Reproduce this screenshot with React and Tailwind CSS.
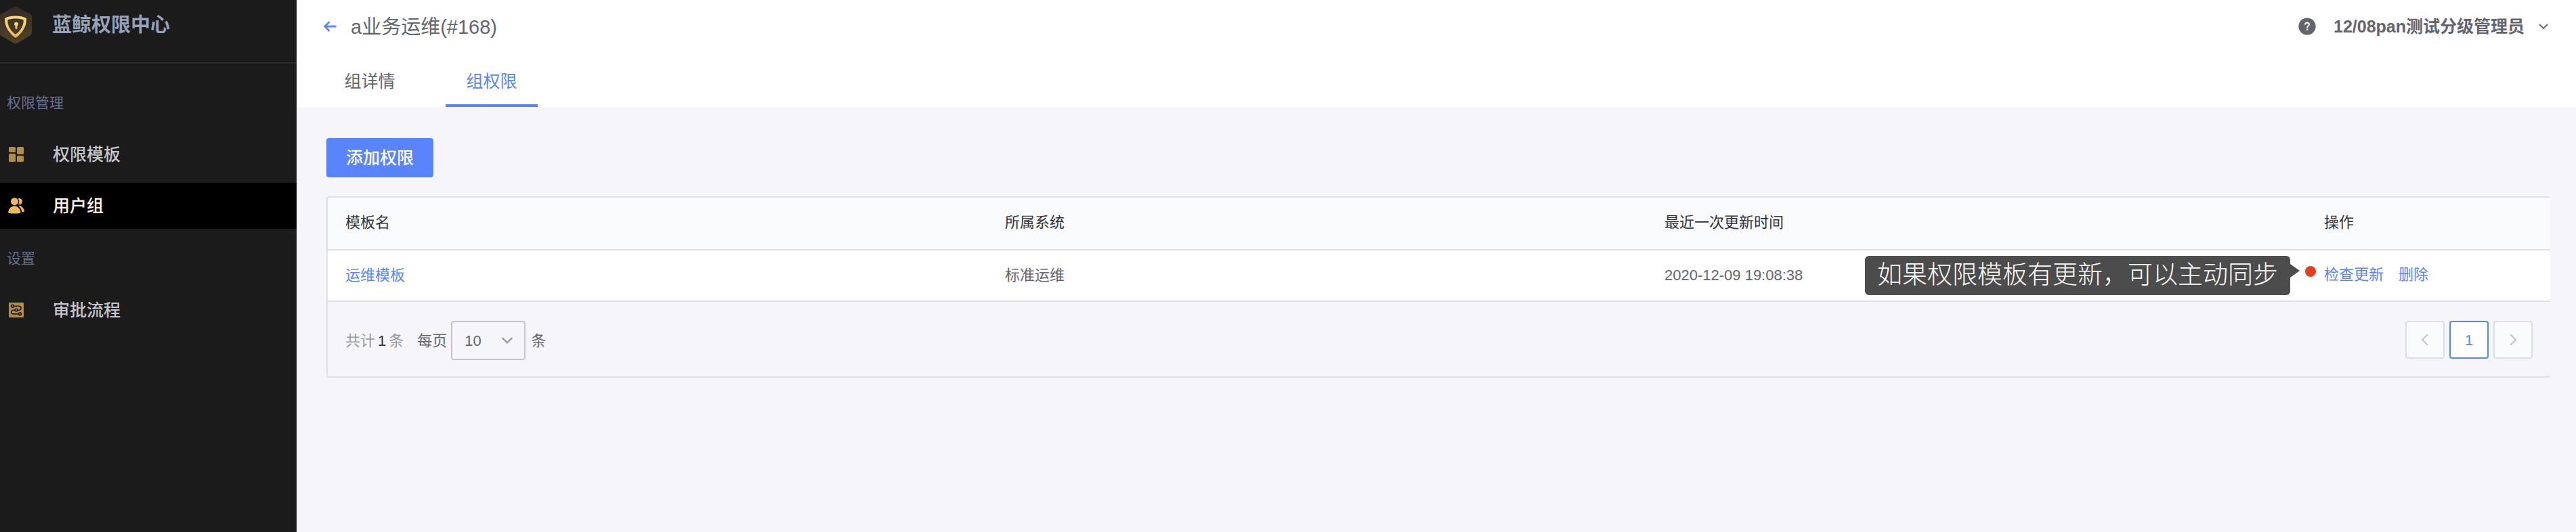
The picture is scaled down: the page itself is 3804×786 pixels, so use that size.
import React from "react";

const columns = ["模板名", "所属系统", "最近一次更新时间", "操作"];

function LogoIcon() {
  return (
    <svg className="-ml-0.5 h-14 w-[50px] shrink-0" viewBox="0 0 50 56" aria-hidden="true">
      <defs>
        <linearGradient id="hex" x1="0" y1="0" x2="0" y2="1">
          <stop offset="0" stopColor="#332d22" />
          <stop offset="1" stopColor="#51422a" />
        </linearGradient>
        <linearGradient id="gold" x1="0" y1="0" x2="0" y2="1">
          <stop offset="0" stopColor="#f9dc80" />
          <stop offset="1" stopColor="#edb758" />
        </linearGradient>
      </defs>
      <path d="M23 1Q25 0 27 1L47 12Q49 13.200 49 15V40Q49 42 47 43.200L27 55Q25 56 23 55L3 43.200Q1 42 1 40V15Q1 13.200 3 12Z" fill="url(#hex)" />
      <path
        fillRule="evenodd"
        fill="url(#gold)"
        d="M25 14.500C31 14.500 36.500 15.500 40.300 17.500Q41 17.900 41 19C41.300 30 35 39.500 26.500 46Q25 47.200 23.500 46C15 39.500 8.700 30 9 19Q9 17.900 9.700 17.500C13.500 15.500 19 14.500 25 14.500ZM25 18.500C20.500 18.500 16.500 19 13.200 20.500C13.200 29 17.500 36.500 25 42C32.500 36.500 36.800 29 36.800 20.500C33.500 19 29.500 18.500 25 18.500Z"
      />
      <path d="M26 23.500a3.100 3.100 0 0 1 1.500 5.800V32.500a1.500 1.500 0 0 1-3 0V29.300A3.100 3.100 0 0 1 26 23.500Z" fill="url(#gold)" />
    </svg>
  );
}

function TemplateIcon() {
  return (
    <svg className="h-6 w-6" viewBox="0 0 24 24" fill="#b18e47" aria-hidden="true">
      <rect x="1" y="1" width="10" height="8" rx="1.500" />
      <rect x="13" y="1" width="10" height="11" rx="1.500" />
      <rect x="1" y="11" width="10" height="12" rx="1.500" />
      <rect x="13" y="14" width="10" height="9" rx="1.500" />
    </svg>
  );
}

function UsersIcon() {
  return (
    <svg className="h-6 w-6" viewBox="0 0 24 24" fill="#efb95b" aria-hidden="true">
      <circle cx="9.500" cy="5.700" r="5.500" />
      <path d="M9.300 12.300C13.800 12.300 17.500 16 18.400 21Q18.600 22.600 17 22.900Q9.300 24 1.600 22.900Q0 22.600 .2 21C1 16 4.700 12.300 9.300 12.300Z" />
      <path d="M14.800 1C18.500 .6 21 2.700 21 5.600C21 8.500 18.800 10.400 15.600 10.200Q14.900 10.100 15.300 9.500C16.900 6.900 16.800 4 14.800 1.800Q14.300 1.100 14.800 1Z" />
      <path d="M16 11.700C20 12.200 23.200 15.500 24 19.300Q24.200 20.600 23 20.900L21 21.200Q20.300 21.200 20.200 20.400C19.700 17.300 18.200 14.700 15.600 12.500Q15 11.700 16 11.700Z" />
    </svg>
  );
}

function FlowIcon() {
  return (
    <svg className="h-6 w-6" viewBox="0 0 24 24" fill="none" aria-hidden="true">
      <rect x="1" y="1" width="22" height="22" rx="1" fill="#b18e47" />
      <g stroke="#1b1b1b" strokeWidth="1.600">
        <path d="M8.300 6.200H16a3 3 0 0 1 0 6H14M10 12.200H7.500a2.800 2.800 0 0 0 0 5.700H15.500" />
        <circle cx="6.400" cy="6.200" r="1.900" />
        <circle cx="12" cy="12.100" r="1.900" />
        <circle cx="17.500" cy="17.800" r="1.900" />
      </g>
    </svg>
  );
}

function Chevron({ className, d, width = 2 }) {
  return (
    <svg className={className} viewBox="0 0 16 16" fill="none" stroke="currentColor" strokeWidth={width} aria-hidden="true">
      <path d={d} strokeLinecap="round" />
    </svg>
  );
}

function NavLabel({ children }) {
  return <h2 className="mt-[22px] mb-5 pl-2.5 text-[21px] leading-[44px] text-[#67708f]">{children}</h2>;
}

function NavItem({ icon, active, children }) {
  return (
    <a
      href="#"
      aria-current={active ? "page" : undefined}
      className={
        "flex h-[68px] items-center gap-[42px] pl-3 text-[25px] font-medium " +
        (active ? "bg-black text-white" : "text-[#c4c6cc]")
      }
    >
      {icon}
      <span className="pt-0.5">{children}</span>
    </a>
  );
}

export default function App() {
  return (
    <div
      lang="zh-CN"
      className="flex min-h-screen bg-[#f5f5fa] font-['Liberation_Sans','Noto_Sans_CJK_SC',sans-serif] text-[#63656e]"
    >
      <aside className="w-[438px] shrink-0 bg-[#1b1b1b]">
        <div className="flex h-[94px] items-start gap-[29px] border-b-2 border-[#292929] pt-[9px]">
          <LogoIcon />
          <h1 className="text-[29px] leading-[56px] font-bold text-[#96a2b9]">蓝鲸权限中心</h1>
        </div>
        <nav className="pt-3.5">
          <NavLabel>权限管理</NavLabel>
          <div className="flex flex-col gap-2">
            <NavItem icon={<TemplateIcon />}>权限模板</NavItem>
            <NavItem icon={<UsersIcon />} active>
              用户组
            </NavItem>
          </div>
          <NavLabel>设置</NavLabel>
          <NavItem icon={<FlowIcon />}>审批流程</NavItem>
        </nav>
      </aside>

      <div className="min-w-0 flex-1">
        <header className="bg-white pr-10 pl-10">
          <div className="flex h-[78px] items-center justify-between">
            <div className="flex items-center gap-5">
              <button type="button" aria-label="返回" className="text-[#5e8bff]">
                <svg className="h-5 w-5" viewBox="0 0 20 20" fill="none" stroke="currentColor" strokeWidth="2.800" aria-hidden="true">
                  <path d="M18.500 10H2M8.500 3L1.800 10L8.500 17" />
                </svg>
              </button>
              <h2 className="pt-0.5 text-[29px] leading-10">a业务运维(#168)</h2>
            </div>
            <div className="flex items-center">
              <button type="button" aria-label="帮助" className="mr-[26px]">
                <svg className="h-[26px] w-[26px]" viewBox="0 0 26 26" aria-hidden="true">
                  <circle cx="13" cy="13" r="12.600" fill="#63656e" />
                  <path d="M10 10.400C10 8.600 11.200 7.600 12.900 7.600C14.700 7.600 15.900 8.600 15.900 10.100C15.900 12.200 13.100 12.300 13.100 14.800" fill="none" stroke="#fff" strokeWidth="2.200" />
                  <rect x="11.900" y="16.300" width="2.400" height="2.400" fill="#fff" />
                </svg>
              </button>
              <button type="button" className="flex items-center gap-5 text-[25px] leading-10 font-bold">
                12/08pan测试分级管理员
                <Chevron className="h-4 w-4" d="M2.500 5.500L8 11L13.500 5.500" width={1.8} />
              </button>
            </div>
          </div>
          <div role="tablist" className="flex h-20 gap-11">
            <button type="button" role="tab" aria-selected="false" className="w-[136px] border-b-4 border-transparent pt-2.5 text-[25px]">
              组详情
            </button>
            <button type="button" role="tab" aria-selected="true" className="w-[136px] border-b-4 border-[#5a84fb] pt-2.5 text-[25px] text-[#5a84fb]">
              组权限
            </button>
          </div>
        </header>

        <main className="pt-[46px] pr-[38px] pl-11">
          <button type="button" className="h-[58px] rounded bg-[#5a84fb] px-[29px] pt-0.5 text-[25px] font-medium text-white">
            添加权限
          </button>

          <section className="mt-7 rounded border-2 border-r-0 border-[#dfe0e5] text-[22px]">
            <table className="w-full table-fixed border-separate border-spacing-0 text-left">
              <thead>
                <tr className="h-[78px] bg-[#fafbfd] text-[#313238]">
                  {columns.map((name, i) => (
                    <th
                      key={name}
                      className={"border-b-2 border-[#dfe0e5] px-[26px] pt-0 pb-1 font-normal " + (i === 3 ? "w-[360px]" : "")}
                    >
                      {name}
                    </th>
                  ))}
                </tr>
              </thead>
              <tbody>
                <tr className="h-[76px] bg-white">
                  <td className="border-b-2 border-[#dfe0e5] px-[26px] pt-0 pb-0.5">
                    <a href="#" className="text-[#5a84fb]">运维模板</a>
                  </td>
                  <td className="border-b-2 border-[#dfe0e5] px-[26px] pt-0 pb-0.5">标准运维</td>
                  <td className="border-b-2 border-[#dfe0e5] px-[26px] pt-0 pb-0.5">2020-12-09 19:08:38</td>
                  <td className="border-b-2 border-[#dfe0e5] px-[26px] pt-0 pb-1">
                    <div className="relative flex gap-[22px] text-[#5a84fb]">
                      <div
                        role="tooltip"
                        className="absolute top-1/2 right-full mt-0.5 mr-[50px] -translate-y-1/2 rounded-md bg-[#4c4c4c] px-[18px] text-[37px] leading-[58px] font-light whitespace-nowrap text-white"
                      >
                        如果权限模板有更新，可以主动同步
                        <svg className="absolute top-3 left-full h-5 w-3.5" viewBox="0 0 14 20" fill="#4c4c4c" aria-hidden="true">
                          <path d="M0 0L14 10L0 20Z" />
                        </svg>
                      </div>
                      <span className="absolute top-1/2 right-full mr-3 h-4 w-4 -translate-y-3 rounded-full bg-[#dd411f]" />
                      <a href="#">检查更新</a>
                      <a href="#">删除</a>
                    </div>
                  </td>
                </tr>
              </tbody>
            </table>

            <div className="flex h-[110px] items-center justify-between px-[26px]">
              <div className="flex items-center pt-1">
                <span className="text-[#979ba5]">
                  共计<span className="px-1 text-[#313238]">1</span>条
                </span>
                <label htmlFor="page-size" className="ml-5">每页</label>
                <div className="relative mr-2 ml-1.5">
                  <select
                    id="page-size"
                    defaultValue="10"
                    className="block h-[58px] w-[110px] appearance-none rounded border-2 border-[#c4c6cc] bg-transparent pl-[18px]"
                  >
                    <option>10</option>
                    <option>20</option>
                    <option>50</option>
                  </select>
                  <Chevron className="pointer-events-none absolute top-5 right-[18px] h-[18px] w-[18px] text-[#979ba5]" d="M2 5L8 11L14 5" />
                </div>
                <span>条</span>
              </div>
              <div className="flex gap-[7px] pt-0.5">
                <button type="button" aria-label="上一页" className="flex h-14 w-[58px] items-center justify-center rounded border-2 border-[#dcdee5] bg-[#fafbfd] text-[#c4c6cc]">
                  <Chevron className="h-[18px] w-[18px]" d="M11 1.500L4.500 8L11 14.500" />
                </button>
                <button type="button" aria-current="page" className="h-14 w-[58px] rounded border-2 border-[#5a84fb] bg-white text-[#5a84fb]">
                  1
                </button>
                <button type="button" aria-label="下一页" className="flex h-14 w-[58px] items-center justify-center rounded border-2 border-[#dcdee5] bg-[#fafbfd] text-[#c4c6cc]">
                  <Chevron className="h-[18px] w-[18px]" d="M5 1.500L11.500 8L5 14.500" />
                </button>
              </div>
            </div>
          </section>
        </main>
      </div>
    </div>
  );
}
